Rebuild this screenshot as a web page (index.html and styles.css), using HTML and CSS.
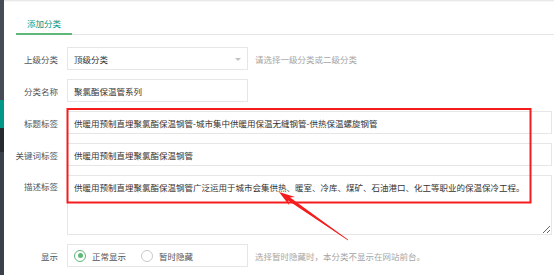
FILE: index.html
```html
<!DOCTYPE html>
<html lang="zh-CN">
  <head>
    <meta charset="UTF-8" />
    <meta name="viewport" content="width=device-width, initial-scale=1.0" />
    <title>添加分类</title>
    <link rel="stylesheet" href="styles.css">
  </head>
  <body>
    <div class="page">
      <div class="side">
        <div class="side-top"></div>
        <div class="side-active"></div>
        <div class="side-dark"></div>
        <div class="side-rest"></div>
      </div>

      <div class="main">
        <div class="tabs">
          <div class="tab this">添加分类</div>
        </div>

        <div class="form">
          <div class="row">
            <label class="label">上级分类</label>
            <div class="select">
              <span>顶级分类</span>
              <i class="caret"></i>
            </div>
            <span class="help">请选择一级分类或二级分类</span>
          </div>

          <div class="row">
            <label class="label">分类名称</label>
            <div class="input short">聚氯酯保温管系列</div>
          </div>

          <div class="row">
            <label class="label">标题标签</label>
            <div class="input wide">供暖用预制直埋聚氯酯保温钢管-城市集中供暖用保温无缝钢管-供热保温螺旋钢管</div>
          </div>

          <div class="row">
            <label class="label">关键词标签</label>
            <div class="input wide">供暖用预制直埋聚氯酯保温钢管</div>
          </div>

          <div class="row top">
            <label class="label">描述标签</label>
            <textarea class="textarea">供暖用预制直埋聚氯酯保温钢管广泛运用于城市会集供热、暖室、冷库、煤矿、石油港口、化工等职业的保温保冷工程。</textarea>
          </div>

          <div class="row">
            <label class="label">显示</label>
            <div class="radios">
              <span class="radio checked"><i></i>正常显示</span>
              <span class="radio"><i></i>暂时隐藏</span>
            </div>
            <span class="help">选择暂时隐藏时，本分类不显示在网站前台。</span>
          </div>
        </div>
      </div>

      <!-- annotation drawn over the screenshot -->
      <svg class="marks" width="554" height="275" viewBox="0 0 554 275">
        <rect x="67.5" y="109" width="463" height="93.5" fill="none" stroke="#f41c1c" stroke-width="2" />
        <polygon fill="#f41c1c" points="279,192 289.2,205.2 288.1,200.6 348.1,240.5 347.9,239.5 290.1,197.5 295.0,197.0" />
      </svg>
    </div>
  </body>
</html>
```

FILE: styles.css
```css
/* ---- BASIC ---- */
* {
  padding: 0;
  margin: 0;
  box-sizing: border-box;
  font-family: "Noto Sans CJK SC", "Noto Sans", sans-serif;
}

body {
  background: #fff;
  overflow: hidden;
}

.page {
  position: relative;
  display: flex;
  width: 554px;
  height: 275px;
}

/* ---- SIDEBAR EDGE ---- */
.side {
  display: flex;
  flex-direction: column;
  width: 4px;
  flex-shrink: 0;
}

.side-top {
  height: 100px;
  background: #474b55;
}

.side-active {
  height: 28px;
  background: #009688;
}

.side-dark {
  height: 24px;
  background: #262930;
}

.side-rest {
  flex: 1;
  background: #3b3f4a;
}

/* ---- MAIN ---- */
.main {
  flex: 1;
  padding: 13px 2px 0 12px;
  box-shadow: inset 0 2px 2px -1px rgba(0, 0, 0, 0.12);
  font-size: 8.5px;
}

.tabs {
  display: flex;
  border-bottom: 1px solid #e6e6e6;
  margin-right: -2px;
}

.tab {
  height: 22px;
  line-height: 20px;
  padding: 0 11px;
  color: #009688;
  font-size: 8.5px;
}

.tab.this {
  border-bottom: 2px solid #5fb878;
  margin-bottom: -1px;
}

/* ---- FORM ---- */
.form {
  margin-top: 12px;
}

.row {
  display: flex;
  align-items: center;
  margin-bottom: 9px;
}

.row.top {
  align-items: flex-start;
}

.row.top .label {
  line-height: 22px;
}

.label {
  width: 42px;
  margin-right: 9px;
  text-align: right;
  white-space: nowrap;
  color: #555;
  font-size: 8.5px;
}

.label:first-child {
  direction: rtl;
}

.input,
.select,
.textarea,
.radios {
  height: 23px;
  border: 1px solid #e6e6e6;
  background: #fff;
  color: #333;
  font-size: 8.5px;
}

.input,
.select {
  display: flex;
  align-items: center;
  padding-left: 6px;
  white-space: nowrap;
}

.short,
.select,
.radios {
  width: 181px;
}

.wide {
  flex: 1;
}

.select {
  position: relative;
}

.caret {
  position: absolute;
  right: 6px;
  top: 10px;
  border-left: 3px solid transparent;
  border-right: 3px solid transparent;
  border-top: 3px solid #c2c2c2;
}

.textarea {
  flex: 1;
  height: 60px;
  padding: 5px 6px;
  line-height: 12px;
  resize: vertical;
  outline: none;
  font-family: "Noto Sans CJK SC", "Noto Sans", sans-serif;
}

.help {
  margin-left: 7px;
  color: #a6a6a6;
  font-size: 8.5px;
  white-space: nowrap;
}

/* ---- RADIO ---- */
.radios {
  display: flex;
  align-items: center;
  padding-left: 6px;
  gap: 15px;
}

.radio {
  display: flex;
  align-items: center;
  gap: 6px;
  color: #555;
}

.radio i {
  display: flex;
  align-items: center;
  justify-content: center;
  width: 12px;
  height: 12px;
  border: 1px solid #c9c9c9;
  border-radius: 50%;
}

.radio.checked i {
  border-color: #5fb878;
}

.radio.checked i::after {
  content: "";
  width: 5px;
  height: 5px;
  border-radius: 50%;
  background: #5fb878;
}

/* ---- ANNOTATION ---- */
.marks {
  position: absolute;
  left: 0;
  top: 0;
  pointer-events: none;
}
```
